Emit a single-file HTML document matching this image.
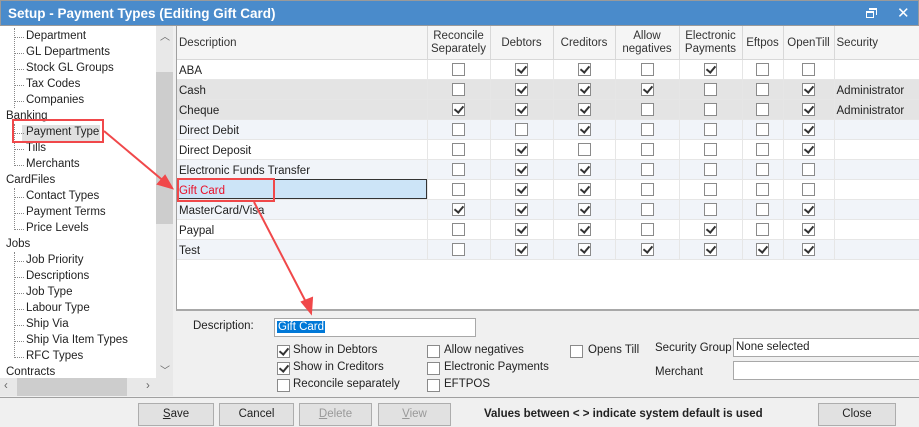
<!DOCTYPE html>
<html><head><meta charset="utf-8"><style>
*{box-sizing:border-box;margin:0;padding:0}
body{width:919px;height:427px;overflow:hidden;background:#f0f0f0;font-family:"Liberation Sans",sans-serif;font-size:11.5px;color:#222;position:relative}
.a{position:absolute}
#title{left:0;top:0;width:919px;height:26px;background:#4a8bcb;border:1px solid #9a9a9a;color:#fff;font-weight:bold;font-size:13.5px;padding:5px 0 0 7px}
#tree{left:0;top:28px;width:156px;height:350px;background:#fff}
#treebg{left:0;top:26px;width:156px;height:352px;background:#fff}
.ti{position:absolute;white-space:nowrap}
.dot{position:absolute;border-top:1px dotted #888;width:9px}
#vs{left:156px;top:26px;width:17px;height:352px;background:#e8e8e8}
#hs{left:0;top:378px;width:173px;height:18px;background:#e8e8e8}
table{border-collapse:collapse;table-layout:fixed}
#grid{left:176px;top:26px;width:743px;height:285px;background:#fff;border-left:1px solid #a0a0a0;border-bottom:2px solid #a8a8a8}
th{height:33px;background:#f5f5f5;border-right:1px solid #d8d8d8;border-bottom:1px solid #d8d8d8;font-weight:normal;font-size:11.5px;line-height:13px;color:#333;padding-top:2px}
td{height:20px;border-right:1px solid #e6e6e6;border-bottom:1px solid #e6e6e6;text-align:center;padding:0}
td.d{text-align:left;padding-left:2px;padding-top:3px}
tr.g td{background:#e4e4e4}
tr.b td{background:#f1f4f9}
.c{display:inline-block;width:13px;height:13px;border:1px solid #8a8a8a;background:#fff;vertical-align:middle;position:relative}
i.c.a{position:absolute}
.k::after{content:"";position:absolute;left:3px;top:0px;width:4px;height:7px;border-right:2px solid #333;border-bottom:2px solid #333;transform:rotate(40deg)}
.btn{position:absolute;top:403px;height:23px;border:1px solid #adadad;background:#e1e1e1;text-align:center;line-height:21px}
.lbl{position:absolute;white-space:nowrap}
.inp{position:absolute;background:#fff;border:1px solid #a8a8a8;height:19px;padding:2px 2px}
</style></head><body>
<div id="title" class="a">Setup - Payment Types (Editing Gift Card)
<span class="a" style="left:865px;top:10px;width:8px;height:7px;border:1px solid #fff;border-top-width:2px"></span>
<span class="a" style="left:868px;top:7px;width:8px;height:7px;border-top:2px solid #fff;border-right:1px solid #fff"></span>
<span class="a" style="left:896px;top:3px;font-size:15px;font-weight:normal">✕</span></div>
<div id="treebg" class="a"></div>
<div id="tree" class="a">
<div class="dot" style="left:15px;top:9px"></div><div class="ti" style="left:26px;top:2px">Department</div>
<div class="dot" style="left:15px;top:25px"></div><div class="ti" style="left:26px;top:18px">GL Departments</div>
<div class="dot" style="left:15px;top:41px"></div><div class="ti" style="left:26px;top:34px">Stock GL Groups</div>
<div class="dot" style="left:15px;top:57px"></div><div class="ti" style="left:26px;top:50px">Tax Codes</div>
<div class="dot" style="left:15px;top:73px"></div><div class="ti" style="left:26px;top:66px">Companies</div>
<div class="ti" style="left:6px;top:82px">Banking</div>
<div class="a" style="left:22px;top:97px;width:78px;height:16px;background:#e0e0e0"></div>
<div class="dot" style="left:15px;top:105px"></div><div class="ti" style="left:26px;top:98px">Payment Type</div>
<div class="dot" style="left:15px;top:121px"></div><div class="ti" style="left:26px;top:114px">Tills</div>
<div class="dot" style="left:15px;top:137px"></div><div class="ti" style="left:26px;top:130px">Merchants</div>
<div class="ti" style="left:6px;top:146px">CardFiles</div>
<div class="dot" style="left:15px;top:169px"></div><div class="ti" style="left:26px;top:162px">Contact Types</div>
<div class="dot" style="left:15px;top:185px"></div><div class="ti" style="left:26px;top:178px">Payment Terms</div>
<div class="dot" style="left:15px;top:201px"></div><div class="ti" style="left:26px;top:194px">Price Levels</div>
<div class="ti" style="left:6px;top:210px">Jobs</div>
<div class="dot" style="left:15px;top:233px"></div><div class="ti" style="left:26px;top:226px">Job Priority</div>
<div class="dot" style="left:15px;top:249px"></div><div class="ti" style="left:26px;top:242px">Descriptions</div>
<div class="dot" style="left:15px;top:265px"></div><div class="ti" style="left:26px;top:258px">Job Type</div>
<div class="dot" style="left:15px;top:281px"></div><div class="ti" style="left:26px;top:274px">Labour Type</div>
<div class="dot" style="left:15px;top:297px"></div><div class="ti" style="left:26px;top:290px">Ship Via</div>
<div class="dot" style="left:15px;top:313px"></div><div class="ti" style="left:26px;top:306px">Ship Via Item Types</div>
<div class="dot" style="left:15px;top:329px"></div><div class="ti" style="left:26px;top:322px">RFC Types</div>
<div class="ti" style="left:6px;top:338px">Contracts</div>
<div class="a" style="left:14px;top:0px;height:80px;border-left:1px dotted #888"></div>
<div class="a" style="left:14px;top:96px;height:42px;border-left:1px dotted #888"></div>
<div class="a" style="left:14px;top:160px;height:42px;border-left:1px dotted #888"></div>
<div class="a" style="left:14px;top:224px;height:106px;border-left:1px dotted #888"></div>
</div>
<div id="vs" class="a"><div class="a" style="left:0;top:46px;width:17px;height:152px;background:#cdcdcd"></div>
<div class="a" style="left:4px;top:2px;color:#666;font-size:10px">︿</div><div class="a" style="left:4px;top:336px;color:#666;font-size:10px">﹀</div></div>
<div id="hs" class="a"><div class="a" style="left:17px;top:0;width:110px;height:18px;background:#cdcdcd"></div>
<div class="a" style="left:4px;top:2px;color:#666">‹</div><div class="a" style="left:146px;top:2px;color:#666">›</div></div>

<div id="grid" class="a">
<table style="width:743px">
<colgroup><col style="width:250px"><col style="width:63px"><col style="width:63px"><col style="width:62px"><col style="width:64px"><col style="width:63px"><col style="width:41px"><col style="width:51px"><col style="width:86px"></colgroup>
<tr><th style="text-align:left;padding-left:2px">Description</th><th>Reconcile<br>Separately</th><th>Debtors</th><th>Creditors</th><th>Allow<br>negatives</th><th>Electronic<br>Payments</th><th>Eftpos</th><th>OpenTill</th><th style="text-align:left;padding-left:2px">Security</th></tr>
<tr><td class="d">ABA</td><td><i class="c"></i></td><td><i class="c k"></i></td><td><i class="c k"></i></td><td><i class="c"></i></td><td><i class="c k"></i></td><td><i class="c"></i></td><td><i class="c"></i></td><td></td></tr>
<tr class="g"><td class="d">Cash</td><td><i class="c"></i></td><td><i class="c k"></i></td><td><i class="c k"></i></td><td><i class="c k"></i></td><td><i class="c"></i></td><td><i class="c"></i></td><td><i class="c k"></i></td><td class="d">Administrator</td></tr>
<tr class="g"><td class="d">Cheque</td><td><i class="c k"></i></td><td><i class="c k"></i></td><td><i class="c k"></i></td><td><i class="c"></i></td><td><i class="c"></i></td><td><i class="c"></i></td><td><i class="c k"></i></td><td class="d">Administrator</td></tr>
<tr class="b"><td class="d">Direct Debit</td><td><i class="c"></i></td><td><i class="c"></i></td><td><i class="c k"></i></td><td><i class="c"></i></td><td><i class="c"></i></td><td><i class="c"></i></td><td><i class="c k"></i></td><td></td></tr>
<tr><td class="d">Direct Deposit</td><td><i class="c"></i></td><td><i class="c k"></i></td><td><i class="c"></i></td><td><i class="c"></i></td><td><i class="c"></i></td><td><i class="c"></i></td><td><i class="c k"></i></td><td></td></tr>
<tr class="b"><td class="d">Electronic Funds Transfer</td><td><i class="c"></i></td><td><i class="c k"></i></td><td><i class="c k"></i></td><td><i class="c"></i></td><td><i class="c"></i></td><td><i class="c"></i></td><td><i class="c"></i></td><td></td></tr>
<tr><td class="d" style="background:#cce4f7;color:#e8102a;outline:1px solid #333;outline-offset:-1px">Gift Card</td><td><i class="c"></i></td><td><i class="c k"></i></td><td><i class="c k"></i></td><td><i class="c"></i></td><td><i class="c"></i></td><td><i class="c"></i></td><td><i class="c"></i></td><td></td></tr>
<tr class="b"><td class="d">MasterCard/Visa</td><td><i class="c k"></i></td><td><i class="c k"></i></td><td><i class="c k"></i></td><td><i class="c"></i></td><td><i class="c"></i></td><td><i class="c"></i></td><td><i class="c k"></i></td><td></td></tr>
<tr><td class="d">Paypal</td><td><i class="c"></i></td><td><i class="c k"></i></td><td><i class="c k"></i></td><td><i class="c"></i></td><td><i class="c k"></i></td><td><i class="c"></i></td><td><i class="c k"></i></td><td></td></tr>
<tr class="b"><td class="d">Test</td><td><i class="c"></i></td><td><i class="c k"></i></td><td><i class="c k"></i></td><td><i class="c k"></i></td><td><i class="c k"></i></td><td><i class="c k"></i></td><td><i class="c k"></i></td><td></td></tr>
</table></div>

<div class="lbl" style="left:193px;top:320px">Description:</div>
<div class="inp" style="left:274px;top:318px;width:202px"><span style="background:#0078d7;color:#fff;padding:0 1px">Gift Card</span></div>
<i class="c k a" style="left:277px;top:345px"></i><div class="lbl" style="left:293px;top:344px">Show in Debtors</div>
<i class="c k a" style="left:277px;top:362px"></i><div class="lbl" style="left:293px;top:361px">Show in Creditors</div>
<i class="c a" style="left:277px;top:379px"></i><div class="lbl" style="left:293px;top:378px">Reconcile separately</div>
<i class="c a" style="left:427px;top:345px"></i><div class="lbl" style="left:444px;top:344px">Allow negatives</div>
<i class="c a" style="left:427px;top:362px"></i><div class="lbl" style="left:444px;top:361px">Electronic Payments</div>
<i class="c a" style="left:427px;top:379px"></i><div class="lbl" style="left:444px;top:378px">EFTPOS</div>
<i class="c a" style="left:570px;top:345px"></i><div class="lbl" style="left:588px;top:344px">Opens Till</div>
<div class="lbl" style="left:655px;top:342px">Security Group</div>
<div class="inp" style="left:733px;top:338px;width:190px">None selected</div>
<div class="lbl" style="left:655px;top:366px">Merchant</div>
<div class="inp" style="left:733px;top:361px;width:190px"></div>

<div class="a" style="left:0;top:397px;width:919px;height:1px;background:#a0a0a0"></div>
<div class="btn" style="left:138px;width:76px"><u>S</u>ave</div>
<div class="btn" style="left:219px;width:75px">Cancel</div>
<div class="btn" style="left:299px;width:73px;color:#999"><u>D</u>elete</div>
<div class="btn" style="left:378px;width:73px;color:#999"><u>V</u>iew</div>
<div class="lbl" style="left:484px;top:408px;font-weight:bold">Values between &lt; &gt; indicate system default is used</div>
<div class="btn" style="left:818px;width:78px">Close</div>

<div class="a" style="left:12px;top:119px;width:92px;height:24px;border:2px solid #f0484a"></div>
<div class="a" style="left:177px;top:178px;width:98px;height:24px;border:2px solid #f0484a"></div>
<svg class="a" style="left:0;top:0" width="919" height="427">
<g stroke="#f0484a" stroke-width="2" fill="#f0484a">
<line x1="104" y1="131" x2="166" y2="183"/><polygon points="172,188 158,184 165,176"/>
<line x1="254" y1="202" x2="308" y2="306"/><polygon points="311,313 302,302 312,298"/>
</g></svg>
</body></html>
